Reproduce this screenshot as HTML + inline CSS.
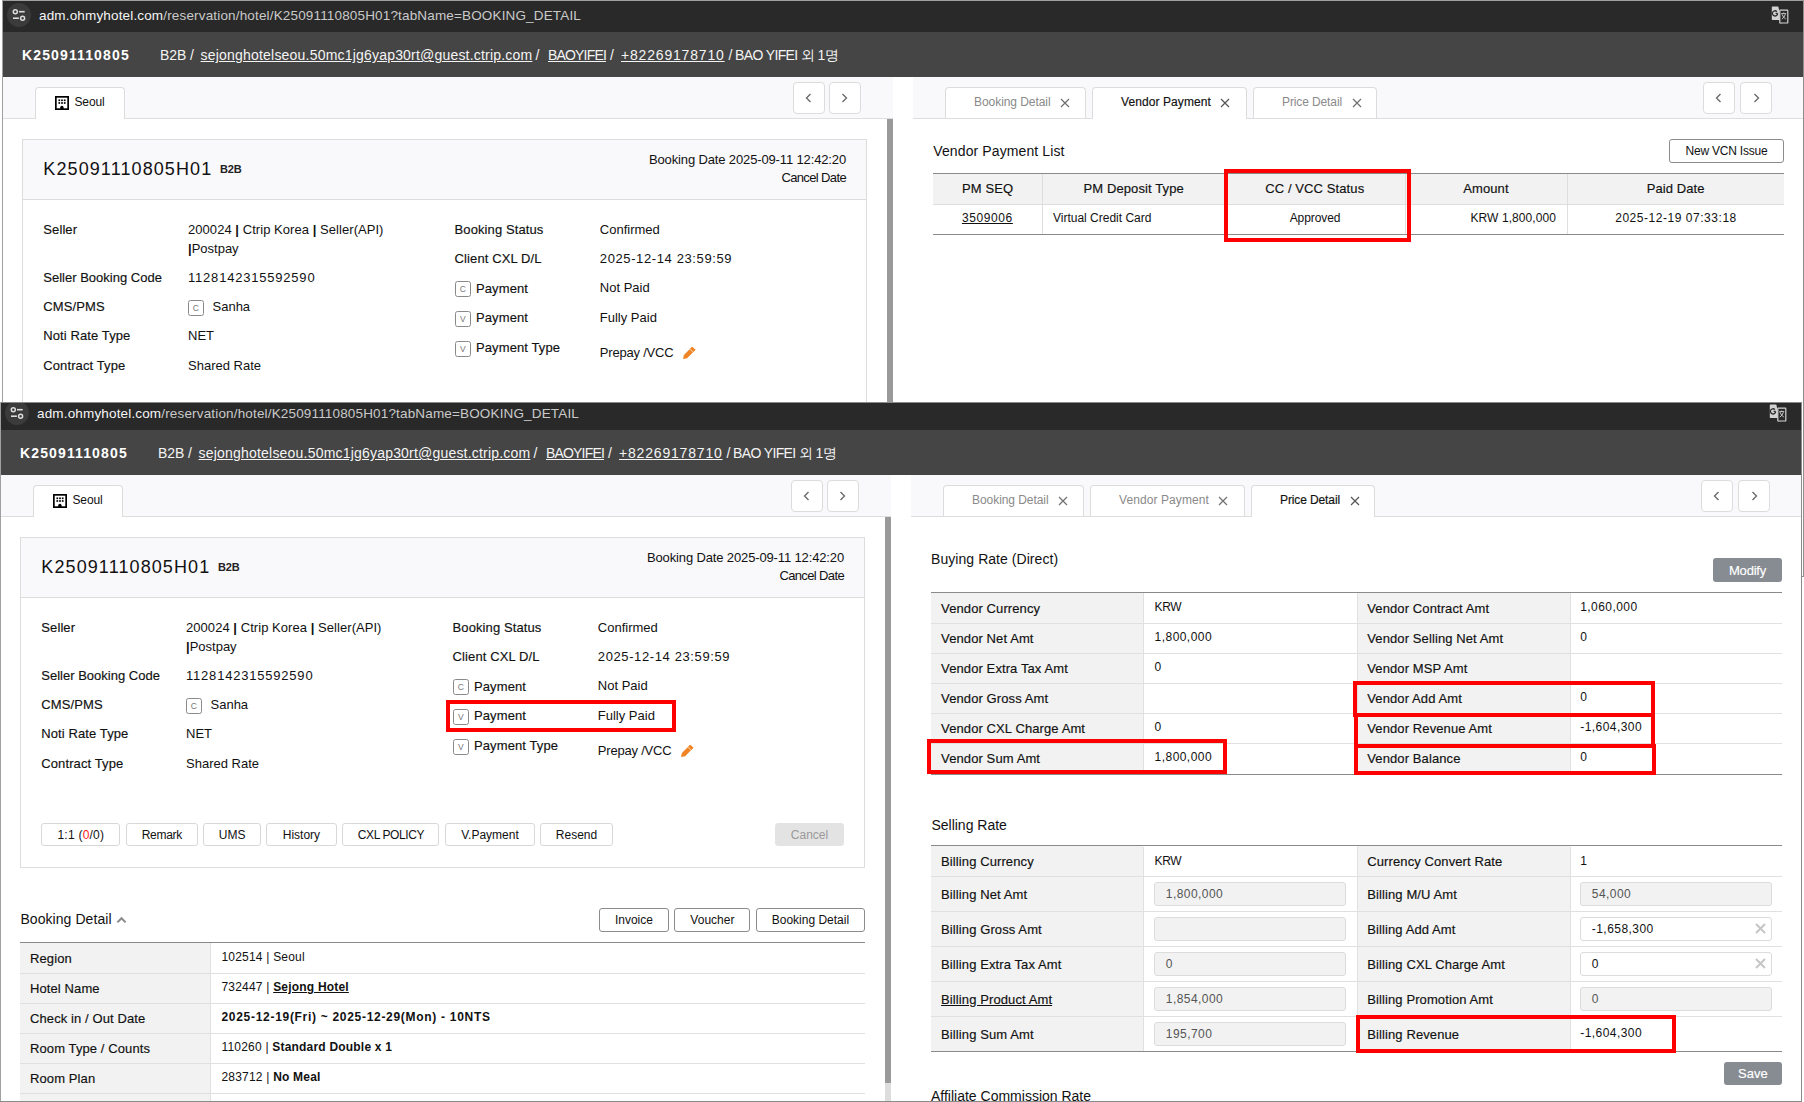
<!DOCTYPE html><html><head><meta charset="utf-8"><style>*{margin:0;padding:0}html,body{width:1804px;height:1102px;overflow:hidden;background:#fff}body{position:relative;font-family:'Liberation Sans', sans-serif}div{position:absolute;white-space:nowrap}.m{-webkit-text-stroke:0.16px currentColor;letter-spacing:0.1px}</style></head><body><div style="left:0;top:0;width:1804px;height:577px;overflow:hidden;background:#fff">
<div style="left:3.00px;top:1.00px;width:1800.00px;height:31.00px;background:#292929;"></div>
<div style="left:6.80px;top:3.00px;width:24.00px;height:24.00px;background:#3b3b3b;border-radius:50%;"></div>
<svg style="position:absolute;left:11.00px;top:8.00px" width="17" height="14" viewBox="0 0 17 14"><circle cx="4.3" cy="3.7" r="2" stroke="#ddd" stroke-width="1.5" fill="none"/><path d="M8 3.7 H13.7" stroke="#ddd" stroke-width="1.6"/><path d="M2 10.2 H7.9" stroke="#ddd" stroke-width="1.6"/><circle cx="11.6" cy="10.2" r="2" stroke="#ddd" stroke-width="1.5" fill="none"/></svg>
<div style="top:8.87px;font-size:13.5px;line-height:13.5px;color:#f5f5f5;letter-spacing:0.160px;left:39.00px;">adm.ohmyhotel.com<span style="color:#c9c9c9">/reservation/hotel/K25091110805H01?tabName=BOOKING_DETAIL</span></div>
<svg style="position:absolute;left:1771.00px;top:6.00px" width="18" height="18" viewBox="0 0 18 18"><path d="M0.8 1.2 Q0.8 0.6 1.4 0.6 L7.3 0.6 L11.2 17.3 L9.6 17.3 L8.4 13.9 L1.4 13.9 Q0.8 13.9 0.8 13.3 Z" fill="#d2d2d2"/><path d="M6.6 7.4 L4.6 7.4 M6.6 7.4 A2.6 2.6 0 1 1 5.9 5.6" stroke="#2a2a2a" stroke-width="1.3" fill="none"/><rect x="8.8" y="4.2" width="8" height="12.8" rx="0.6" fill="#2a2a2a" stroke="#d2d2d2" stroke-width="1.2"/><path d="M10.2 7.6 H15.2 M12.7 6.6 V7.6 M11 8.2 Q12 11.5 14.8 13 M14.4 8.2 Q13.4 11.5 10.8 13.2" stroke="#d2d2d2" stroke-width="0.9" fill="none"/></svg>
<div style="left:3.00px;top:32.00px;width:1800.00px;height:45.00px;background:#454545;"></div>
<div style="top:48.15px;font-size:14px;line-height:14px;color:#fff;font-weight:bold;letter-spacing:1.132px;left:22.00px;">K25091110805</div>
<div style="top:48.15px;font-size:14px;line-height:14px;color:#f4f4f4;letter-spacing:-0.070px;left:160.00px;">B2B /</div>
<div style="top:48.15px;font-size:14px;line-height:14px;color:#f4f4f4;letter-spacing:0.200px;text-decoration:underline;left:200.60px;">sejonghotelseou.50mc1jg6yap30rt@guest.ctrip.com</div>
<div style="top:48.15px;font-size:14px;line-height:14px;color:#f4f4f4;left:535.50px;">/</div>
<div style="top:48.15px;font-size:14px;line-height:14px;color:#f4f4f4;letter-spacing:-0.822px;text-decoration:underline;left:548.00px;">BAOYIFEI</div>
<div style="top:48.15px;font-size:14px;line-height:14px;color:#f4f4f4;left:610.00px;">/</div>
<div style="top:48.15px;font-size:14px;line-height:14px;color:#f4f4f4;letter-spacing:0.814px;text-decoration:underline;left:621.00px;">+82269178710</div>
<div style="top:48.15px;font-size:14px;line-height:14px;color:#f4f4f4;letter-spacing:-0.629px;left:728.50px;">/ BAO YIFEI 외 1명</div>
<div style="left:3.00px;top:77.00px;width:890.00px;height:42.00px;background:#f9f8fa;"></div>
<div style="left:3.00px;top:118.00px;width:890.00px;height:1.00px;background:#dedede;"></div>
<div style="left:35.00px;top:87.00px;width:90.00px;height:32.00px;box-sizing:border-box;background:#fff;border:1px solid #dcdcdc;border-bottom:none;border-radius:4px 4px 0 0;"></div>
<svg style="position:absolute;left:55.00px;top:96.00px" width="14" height="14" viewBox="0 0 14 14"><rect x="0.85" y="0.85" width="12.3" height="12.3" fill="#fff" stroke="#000" stroke-width="1.7"/><rect x="3.45" y="3.45" width="1.7" height="1.7" fill="#000"/><rect x="3.45" y="6.15" width="1.7" height="1.7" fill="#000"/><rect x="6.15" y="3.45" width="1.7" height="1.7" fill="#000"/><rect x="6.15" y="6.15" width="1.7" height="1.7" fill="#000"/><rect x="8.85" y="3.45" width="1.7" height="1.7" fill="#000"/><rect x="8.85" y="6.15" width="1.7" height="1.7" fill="#000"/><path d="M5.2 13.2 L5.2 10.9 Q6.9 8.5 8.6 10.9 L8.6 13.2 Z" fill="#000"/></svg>
<div style="top:96.14px;font-size:12px;line-height:12px;color:#111;letter-spacing:-0.141px;left:74.50px;">Seoul</div>
<div style="left:793.00px;top:82.00px;width:31.50px;height:31.50px;box-sizing:border-box;background:#fff;border:1px solid #dcdcdc;border-radius:4px;"></div>
<svg style="position:absolute;left:805.25px;top:92.80px" width="7" height="10" viewBox="0 0 7 10"><path d="M5.5 1 L1.5 5 L5.5 9" stroke="#666" stroke-width="1.3" fill="none"/></svg>
<div style="left:829.00px;top:82.00px;width:31.50px;height:31.50px;box-sizing:border-box;background:#fff;border:1px solid #dcdcdc;border-radius:4px;"></div>
<svg style="position:absolute;left:841.25px;top:92.80px" width="7" height="10" viewBox="0 0 7 10"><path d="M1.5 1 L5.5 5 L1.5 9" stroke="#666" stroke-width="1.3" fill="none"/></svg>
<div style="left:913.00px;top:77.00px;width:890.00px;height:42.00px;background:#f9f8fa;"></div>
<div style="left:913.00px;top:118.00px;width:890.00px;height:1.00px;background:#dedede;"></div>
<div style="left:945.30px;top:87.00px;width:141.00px;height:31.00px;box-sizing:border-box;background:#fff;border:1px solid #dcdcdc;border-bottom:none;border-radius:4px 4px 0 0;"></div>
<div style="top:96.14px;font-size:12px;line-height:12px;color:#8a8a8a;letter-spacing:-0.056px;left:974.00px;">Booking Detail</div>
<svg style="position:absolute;left:1060.20px;top:97.60px" width="10" height="10" viewBox="0 0 10 10"><path d="M1 1 L9 9 M9 1 L1 9" stroke="#707070" stroke-width="1.2" fill="none"/></svg>
<div style="left:1092.40px;top:87.00px;width:154.30px;height:32.00px;box-sizing:border-box;background:#fff;border:1px solid #dcdcdc;border-bottom:none;border-radius:4px 4px 0 0;"></div>
<div class="m" style="top:96.14px;font-size:12px;line-height:12px;color:#111;letter-spacing:0.090px;left:1121.00px;">Vendor Payment</div>
<svg style="position:absolute;left:1220.00px;top:97.60px" width="10" height="10" viewBox="0 0 10 10"><path d="M1 1 L9 9 M9 1 L1 9" stroke="#555" stroke-width="1.2" fill="none"/></svg>
<div style="left:1252.60px;top:87.00px;width:124.90px;height:31.00px;box-sizing:border-box;background:#fff;border:1px solid #dcdcdc;border-bottom:none;border-radius:4px 4px 0 0;"></div>
<div style="top:96.14px;font-size:12px;line-height:12px;color:#8a8a8a;letter-spacing:-0.113px;left:1282.00px;">Price Detail</div>
<svg style="position:absolute;left:1351.50px;top:97.60px" width="10" height="10" viewBox="0 0 10 10"><path d="M1 1 L9 9 M9 1 L1 9" stroke="#707070" stroke-width="1.2" fill="none"/></svg>
<div style="left:1703.30px;top:82.00px;width:31.30px;height:31.50px;box-sizing:border-box;background:#fff;border:1px solid #dcdcdc;border-radius:4px;"></div>
<svg style="position:absolute;left:1715.40px;top:92.80px" width="7" height="10" viewBox="0 0 7 10"><path d="M5.5 1 L1.5 5 L5.5 9" stroke="#666" stroke-width="1.3" fill="none"/></svg>
<div style="left:1740.40px;top:82.00px;width:31.30px;height:31.50px;box-sizing:border-box;background:#fff;border:1px solid #dcdcdc;border-radius:4px;"></div>
<svg style="position:absolute;left:1752.50px;top:92.80px" width="7" height="10" viewBox="0 0 7 10"><path d="M1.5 1 L5.5 5 L1.5 9" stroke="#666" stroke-width="1.3" fill="none"/></svg>
<div style="left:887.00px;top:119.00px;width:6.00px;height:700.00px;background:#9a9a9a;"></div>
<div style="left:2.00px;top:0.00px;width:1.00px;height:1200.00px;background:#a0a0a0;"></div>
<div style="left:3.00px;top:0.00px;width:1801.00px;height:1.00px;background:#a0a0a0;"></div>
<div style="left:1803.00px;top:0.00px;width:1.00px;height:576.00px;background:#8f8f8f;"></div>
<div style="left:1802.00px;top:576.00px;width:2.00px;height:1.00px;background:#8f8f8f;"></div>
<div style="left:22.00px;top:139.00px;width:845.00px;height:331.00px;box-sizing:border-box;border:1px solid #dddddd;background:#fff;"></div>
<div style="left:23.00px;top:140.00px;width:843.00px;height:59.00px;background:#f9f8fb;"></div>
<div style="left:23.00px;top:199.00px;width:843.00px;height:1.00px;background:#dddddd;"></div>
<div style="top:159.76px;font-size:18px;line-height:18px;color:#111;letter-spacing:1.101px;left:43.30px;">K25091110805H01</div>
<div style="top:163.69px;font-size:11px;line-height:11px;color:#222;font-weight:bold;letter-spacing:-0.105px;left:220.00px;">B2B</div>
<div style="top:153.40px;font-size:13px;line-height:13px;color:#111;letter-spacing:-0.138px;left:-154.00px;width:1000px;text-align:right;">Booking Date 2025-09-11 12:42:20</div>
<div style="top:171.30px;font-size:13px;line-height:13px;color:#111;letter-spacing:-0.632px;left:-154.00px;width:1000px;text-align:right;">Cancel Date</div>
<div class="m" style="top:223.00px;font-size:13px;line-height:13px;color:#111;left:43.30px;">Seller</div>
<div class="m" style="top:271.00px;font-size:13px;line-height:13px;color:#111;letter-spacing:0.004px;left:43.30px;">Seller Booking Code</div>
<div class="m" style="top:300.00px;font-size:13px;line-height:13px;color:#111;left:43.30px;">CMS/PMS</div>
<div class="m" style="top:329.00px;font-size:13px;line-height:13px;color:#111;left:43.30px;">Noti Rate Type</div>
<div class="m" style="top:359.00px;font-size:13px;line-height:13px;color:#111;left:43.30px;">Contract Type</div>

<div style="top:223.00px;font-size:13px;line-height:13px;color:#111;letter-spacing:0.052px;left:188.00px;">200024 <b style="font-weight:bold">|</b> Ctrip Korea <b style="font-weight:bold">|</b> Seller(API)</div>
<div style="top:242.00px;font-size:13px;line-height:13px;color:#111;left:188.00px;"><b style="font-weight:bold">|</b>Postpay</div>
<div style="top:271.00px;font-size:13px;line-height:13px;color:#111;letter-spacing:0.793px;left:188.00px;">1128142315592590</div>
<div style="left:188.00px;top:300.20px;width:15.50px;height:15.50px;box-sizing:border-box;border:1px solid #8a8a8a;border-radius:2.5px;background:#fff;"></div>
<div style="top:304.20px;font-size:8.5px;line-height:8.5px;color:#777;left:-304.25px;width:1000px;text-align:center;">C</div>
<div style="top:300.00px;font-size:13px;line-height:13px;color:#111;left:212.50px;">Sanha</div>
<div style="top:329.00px;font-size:13px;line-height:13px;color:#111;left:188.00px;">NET</div>
<div style="top:359.00px;font-size:13px;line-height:13px;color:#111;left:188.00px;">Shared Rate</div>
<div class="m" style="top:223.40px;font-size:13px;line-height:13px;color:#111;left:454.60px;">Booking Status</div>
<div class="m" style="top:252.00px;font-size:13px;line-height:13px;color:#111;left:454.60px;">Client CXL D/L</div>
<div style="left:455.00px;top:281.10px;width:15.50px;height:15.50px;box-sizing:border-box;border:1px solid #8a8a8a;border-radius:2.5px;background:#fff;"></div>
<div style="top:285.10px;font-size:8.5px;line-height:8.5px;color:#777;left:-37.25px;width:1000px;text-align:center;">C</div>
<div class="m" style="top:282.00px;font-size:13px;line-height:13px;color:#111;left:476.00px;">Payment</div>
<div style="left:455.00px;top:311.20px;width:15.50px;height:15.50px;box-sizing:border-box;border:1px solid #8a8a8a;border-radius:2.5px;background:#fff;"></div>
<div style="top:315.20px;font-size:8.5px;line-height:8.5px;color:#777;left:-37.25px;width:1000px;text-align:center;">V</div>
<div class="m" style="top:311.00px;font-size:13px;line-height:13px;color:#111;left:476.00px;">Payment</div>
<div style="left:455.00px;top:341.30px;width:15.50px;height:15.50px;box-sizing:border-box;border:1px solid #8a8a8a;border-radius:2.5px;background:#fff;"></div>
<div style="top:345.30px;font-size:8.5px;line-height:8.5px;color:#777;left:-37.25px;width:1000px;text-align:center;">V</div>
<div class="m" style="top:341.00px;font-size:13px;line-height:13px;color:#111;left:476.00px;">Payment Type</div>
<div style="top:223.40px;font-size:13px;line-height:13px;color:#111;left:599.80px;">Confirmed</div>
<div style="top:252.00px;font-size:13px;line-height:13px;color:#111;letter-spacing:0.615px;left:599.80px;">2025-12-14 23:59:59</div>
<div style="top:281.40px;font-size:13px;line-height:13px;color:#111;left:599.80px;">Not Paid</div>
<div style="top:311.00px;font-size:13px;line-height:13px;color:#111;left:599.80px;">Fully Paid</div>
<div style="top:346.00px;font-size:13px;line-height:13px;color:#111;letter-spacing:-0.207px;left:599.80px;">Prepay /VCC</div>
<svg style="position:absolute;left:681.00px;top:345.00px" width="17" height="17" viewBox="0 0 17 17"><path d="M2.40 13.70 L3.21 9.99 L8.73 4.47 L11.63 7.37 L6.11 12.89 Z" fill="#ef8424" stroke="#ef8424" stroke-width="0.6" stroke-linejoin="round"/><path d="M9.36 3.84 L11.27 1.93 L14.17 4.83 L12.26 6.74 Z" fill="#ef8424" stroke="#ef8424" stroke-width="0.8" stroke-linejoin="round"/></svg>
<div style="top:144.15px;font-size:14px;line-height:14px;color:#111;letter-spacing:0.111px;left:933.30px;">Vendor Payment List</div>
<div style="left:1669.40px;top:139.40px;width:114.20px;height:23.30px;box-sizing:border-box;border-radius:3px;background:#fff;border:1px solid #8c8c8c;"></div>
<div style="top:145.21px;font-size:12px;line-height:12px;color:#111;letter-spacing:-0.208px;left:1226.50px;width:1000px;text-align:center;">New VCN Issue</div>
<div style="left:933.00px;top:173.00px;width:851.00px;height:1.30px;background:#8a8a8a;"></div>
<div style="left:933.00px;top:174.00px;width:851.00px;height:30.00px;background:#f2f2f2;"></div>
<div style="left:933.00px;top:204.00px;width:851.00px;height:1.00px;background:#dedede;"></div>
<div style="left:933.00px;top:234.00px;width:851.00px;height:1.30px;background:#8a8a8a;"></div>
<div style="left:1042.40px;top:174.00px;width:1.00px;height:60.00px;background:#dedede;"></div>
<div style="left:1225.00px;top:174.00px;width:1.00px;height:60.00px;background:#dedede;"></div>
<div style="left:1404.50px;top:174.00px;width:1.00px;height:60.00px;background:#dedede;"></div>
<div style="left:1567.30px;top:174.00px;width:1.00px;height:60.00px;background:#dedede;"></div>
<div class="m" style="top:182.30px;font-size:13px;line-height:13px;color:#111;left:487.70px;width:1000px;text-align:center;">PM SEQ</div>
<div class="m" style="top:182.30px;font-size:13px;line-height:13px;color:#111;left:633.70px;width:1000px;text-align:center;">PM Deposit Type</div>
<div class="m" style="top:182.30px;font-size:13px;line-height:13px;color:#111;left:814.75px;width:1000px;text-align:center;">CC / VCC Status</div>
<div class="m" style="top:182.30px;font-size:13px;line-height:13px;color:#111;left:985.90px;width:1000px;text-align:center;">Amount</div>
<div class="m" style="top:182.30px;font-size:13px;line-height:13px;color:#111;left:1175.65px;width:1000px;text-align:center;">Paid Date</div>
<div style="top:211.84px;font-size:12px;line-height:12px;color:#111;letter-spacing:0.612px;text-decoration:underline;left:487.40px;width:1000px;text-align:center;">3509006</div>
<div style="top:211.84px;font-size:12px;line-height:12px;color:#111;letter-spacing:-0.004px;left:1053.00px;">Virtual Credit Card</div>
<div style="top:212.04px;font-size:12px;line-height:12px;color:#111;letter-spacing:-0.097px;left:815.00px;width:1000px;text-align:center;">Approved</div>
<div style="top:212.04px;font-size:12px;line-height:12px;color:#111;letter-spacing:0.077px;left:556.00px;width:1000px;text-align:right;">KRW 1,800,000</div>
<div style="top:212.04px;font-size:12px;line-height:12px;color:#111;letter-spacing:0.535px;left:1176.00px;width:1000px;text-align:center;">2025-12-19 07:33:18</div>
<div style="left:1224.00px;top:169.00px;width:187.00px;height:73.00px;box-sizing:border-box;border:4px solid #ff0000;"></div>
</div>
<div style="left:0;top:402px;width:1802px;height:700px;overflow:hidden;background:#fff">
<div style="left:-2px;top:-4px;width:1806px;height:720px;">
<div style="left:3.00px;top:1.00px;width:1800.00px;height:31.00px;background:#292929;"></div>
<div style="left:6.80px;top:3.00px;width:24.00px;height:24.00px;background:#3b3b3b;border-radius:50%;"></div>
<svg style="position:absolute;left:11.00px;top:8.00px" width="17" height="14" viewBox="0 0 17 14"><circle cx="4.3" cy="3.7" r="2" stroke="#ddd" stroke-width="1.5" fill="none"/><path d="M8 3.7 H13.7" stroke="#ddd" stroke-width="1.6"/><path d="M2 10.2 H7.9" stroke="#ddd" stroke-width="1.6"/><circle cx="11.6" cy="10.2" r="2" stroke="#ddd" stroke-width="1.5" fill="none"/></svg>
<div style="top:8.87px;font-size:13.5px;line-height:13.5px;color:#f5f5f5;letter-spacing:0.160px;left:39.00px;">adm.ohmyhotel.com<span style="color:#c9c9c9">/reservation/hotel/K25091110805H01?tabName=BOOKING_DETAIL</span></div>
<svg style="position:absolute;left:1771.00px;top:6.00px" width="18" height="18" viewBox="0 0 18 18"><path d="M0.8 1.2 Q0.8 0.6 1.4 0.6 L7.3 0.6 L11.2 17.3 L9.6 17.3 L8.4 13.9 L1.4 13.9 Q0.8 13.9 0.8 13.3 Z" fill="#d2d2d2"/><path d="M6.6 7.4 L4.6 7.4 M6.6 7.4 A2.6 2.6 0 1 1 5.9 5.6" stroke="#2a2a2a" stroke-width="1.3" fill="none"/><rect x="8.8" y="4.2" width="8" height="12.8" rx="0.6" fill="#2a2a2a" stroke="#d2d2d2" stroke-width="1.2"/><path d="M10.2 7.6 H15.2 M12.7 6.6 V7.6 M11 8.2 Q12 11.5 14.8 13 M14.4 8.2 Q13.4 11.5 10.8 13.2" stroke="#d2d2d2" stroke-width="0.9" fill="none"/></svg>
<div style="left:3.00px;top:32.00px;width:1800.00px;height:45.00px;background:#454545;"></div>
<div style="top:48.15px;font-size:14px;line-height:14px;color:#fff;font-weight:bold;letter-spacing:1.132px;left:22.00px;">K25091110805</div>
<div style="top:48.15px;font-size:14px;line-height:14px;color:#f4f4f4;letter-spacing:-0.070px;left:160.00px;">B2B /</div>
<div style="top:48.15px;font-size:14px;line-height:14px;color:#f4f4f4;letter-spacing:0.200px;text-decoration:underline;left:200.60px;">sejonghotelseou.50mc1jg6yap30rt@guest.ctrip.com</div>
<div style="top:48.15px;font-size:14px;line-height:14px;color:#f4f4f4;left:535.50px;">/</div>
<div style="top:48.15px;font-size:14px;line-height:14px;color:#f4f4f4;letter-spacing:-0.822px;text-decoration:underline;left:548.00px;">BAOYIFEI</div>
<div style="top:48.15px;font-size:14px;line-height:14px;color:#f4f4f4;left:610.00px;">/</div>
<div style="top:48.15px;font-size:14px;line-height:14px;color:#f4f4f4;letter-spacing:0.814px;text-decoration:underline;left:621.00px;">+82269178710</div>
<div style="top:48.15px;font-size:14px;line-height:14px;color:#f4f4f4;letter-spacing:-0.629px;left:728.50px;">/ BAO YIFEI 외 1명</div>
<div style="left:3.00px;top:77.00px;width:890.00px;height:42.00px;background:#f9f8fa;"></div>
<div style="left:3.00px;top:118.00px;width:890.00px;height:1.00px;background:#dedede;"></div>
<div style="left:35.00px;top:87.00px;width:90.00px;height:32.00px;box-sizing:border-box;background:#fff;border:1px solid #dcdcdc;border-bottom:none;border-radius:4px 4px 0 0;"></div>
<svg style="position:absolute;left:55.00px;top:96.00px" width="14" height="14" viewBox="0 0 14 14"><rect x="0.85" y="0.85" width="12.3" height="12.3" fill="#fff" stroke="#000" stroke-width="1.7"/><rect x="3.45" y="3.45" width="1.7" height="1.7" fill="#000"/><rect x="3.45" y="6.15" width="1.7" height="1.7" fill="#000"/><rect x="6.15" y="3.45" width="1.7" height="1.7" fill="#000"/><rect x="6.15" y="6.15" width="1.7" height="1.7" fill="#000"/><rect x="8.85" y="3.45" width="1.7" height="1.7" fill="#000"/><rect x="8.85" y="6.15" width="1.7" height="1.7" fill="#000"/><path d="M5.2 13.2 L5.2 10.9 Q6.9 8.5 8.6 10.9 L8.6 13.2 Z" fill="#000"/></svg>
<div style="top:96.14px;font-size:12px;line-height:12px;color:#111;letter-spacing:-0.141px;left:74.50px;">Seoul</div>
<div style="left:793.00px;top:82.00px;width:31.50px;height:31.50px;box-sizing:border-box;background:#fff;border:1px solid #dcdcdc;border-radius:4px;"></div>
<svg style="position:absolute;left:805.25px;top:92.80px" width="7" height="10" viewBox="0 0 7 10"><path d="M5.5 1 L1.5 5 L5.5 9" stroke="#666" stroke-width="1.3" fill="none"/></svg>
<div style="left:829.00px;top:82.00px;width:31.50px;height:31.50px;box-sizing:border-box;background:#fff;border:1px solid #dcdcdc;border-radius:4px;"></div>
<svg style="position:absolute;left:841.25px;top:92.80px" width="7" height="10" viewBox="0 0 7 10"><path d="M1.5 1 L5.5 5 L1.5 9" stroke="#666" stroke-width="1.3" fill="none"/></svg>
<div style="left:913.00px;top:77.00px;width:890.00px;height:42.00px;background:#f9f8fa;"></div>
<div style="left:913.00px;top:118.00px;width:890.00px;height:1.00px;background:#dedede;"></div>
<div style="left:945.30px;top:87.00px;width:141.00px;height:31.00px;box-sizing:border-box;background:#fff;border:1px solid #dcdcdc;border-bottom:none;border-radius:4px 4px 0 0;"></div>
<div style="top:96.14px;font-size:12px;line-height:12px;color:#8a8a8a;letter-spacing:-0.056px;left:974.00px;">Booking Detail</div>
<svg style="position:absolute;left:1060.20px;top:97.60px" width="10" height="10" viewBox="0 0 10 10"><path d="M1 1 L9 9 M9 1 L1 9" stroke="#707070" stroke-width="1.2" fill="none"/></svg>
<div style="left:1092.40px;top:87.00px;width:154.30px;height:31.00px;box-sizing:border-box;background:#fff;border:1px solid #dcdcdc;border-bottom:none;border-radius:4px 4px 0 0;"></div>
<div style="top:96.14px;font-size:12px;line-height:12px;color:#8a8a8a;letter-spacing:0.090px;left:1121.00px;">Vendor Payment</div>
<svg style="position:absolute;left:1220.00px;top:97.60px" width="10" height="10" viewBox="0 0 10 10"><path d="M1 1 L9 9 M9 1 L1 9" stroke="#707070" stroke-width="1.2" fill="none"/></svg>
<div style="left:1252.60px;top:87.00px;width:124.90px;height:32.00px;box-sizing:border-box;background:#fff;border:1px solid #dcdcdc;border-bottom:none;border-radius:4px 4px 0 0;"></div>
<div class="m" style="top:96.14px;font-size:12px;line-height:12px;color:#111;letter-spacing:-0.113px;left:1282.00px;">Price Detail</div>
<svg style="position:absolute;left:1351.50px;top:97.60px" width="10" height="10" viewBox="0 0 10 10"><path d="M1 1 L9 9 M9 1 L1 9" stroke="#555" stroke-width="1.2" fill="none"/></svg>
<div style="left:1703.30px;top:82.00px;width:31.30px;height:31.50px;box-sizing:border-box;background:#fff;border:1px solid #dcdcdc;border-radius:4px;"></div>
<svg style="position:absolute;left:1715.40px;top:92.80px" width="7" height="10" viewBox="0 0 7 10"><path d="M5.5 1 L1.5 5 L5.5 9" stroke="#666" stroke-width="1.3" fill="none"/></svg>
<div style="left:1740.40px;top:82.00px;width:31.30px;height:31.50px;box-sizing:border-box;background:#fff;border:1px solid #dcdcdc;border-radius:4px;"></div>
<svg style="position:absolute;left:1752.50px;top:92.80px" width="7" height="10" viewBox="0 0 7 10"><path d="M1.5 1 L5.5 5 L1.5 9" stroke="#666" stroke-width="1.3" fill="none"/></svg>
<div style="left:887.00px;top:119.00px;width:6.00px;height:700.00px;background:#9a9a9a;"></div>
<div style="left:2.00px;top:0.00px;width:1.00px;height:1200.00px;background:#a0a0a0;"></div>
<div style="left:3.00px;top:0.00px;width:1801.00px;height:1.00px;background:#a0a0a0;"></div>
<div style="left:22.00px;top:139.00px;width:845.00px;height:331.00px;box-sizing:border-box;border:1px solid #dddddd;background:#fff;"></div>
<div style="left:23.00px;top:140.00px;width:843.00px;height:59.00px;background:#f9f8fb;"></div>
<div style="left:23.00px;top:199.00px;width:843.00px;height:1.00px;background:#dddddd;"></div>
<div style="top:159.76px;font-size:18px;line-height:18px;color:#111;letter-spacing:1.101px;left:43.30px;">K25091110805H01</div>
<div style="top:163.69px;font-size:11px;line-height:11px;color:#222;font-weight:bold;letter-spacing:-0.105px;left:220.00px;">B2B</div>
<div style="top:153.40px;font-size:13px;line-height:13px;color:#111;letter-spacing:-0.138px;left:-154.00px;width:1000px;text-align:right;">Booking Date 2025-09-11 12:42:20</div>
<div style="top:171.30px;font-size:13px;line-height:13px;color:#111;letter-spacing:-0.632px;left:-154.00px;width:1000px;text-align:right;">Cancel Date</div>
<div class="m" style="top:223.00px;font-size:13px;line-height:13px;color:#111;left:43.30px;">Seller</div>
<div class="m" style="top:271.00px;font-size:13px;line-height:13px;color:#111;letter-spacing:0.004px;left:43.30px;">Seller Booking Code</div>
<div class="m" style="top:300.00px;font-size:13px;line-height:13px;color:#111;left:43.30px;">CMS/PMS</div>
<div class="m" style="top:329.00px;font-size:13px;line-height:13px;color:#111;left:43.30px;">Noti Rate Type</div>
<div class="m" style="top:359.00px;font-size:13px;line-height:13px;color:#111;left:43.30px;">Contract Type</div>

<div style="top:223.00px;font-size:13px;line-height:13px;color:#111;letter-spacing:0.052px;left:188.00px;">200024 <b style="font-weight:bold">|</b> Ctrip Korea <b style="font-weight:bold">|</b> Seller(API)</div>
<div style="top:242.00px;font-size:13px;line-height:13px;color:#111;left:188.00px;"><b style="font-weight:bold">|</b>Postpay</div>
<div style="top:271.00px;font-size:13px;line-height:13px;color:#111;letter-spacing:0.793px;left:188.00px;">1128142315592590</div>
<div style="left:188.00px;top:300.20px;width:15.50px;height:15.50px;box-sizing:border-box;border:1px solid #8a8a8a;border-radius:2.5px;background:#fff;"></div>
<div style="top:304.20px;font-size:8.5px;line-height:8.5px;color:#777;left:-304.25px;width:1000px;text-align:center;">C</div>
<div style="top:300.00px;font-size:13px;line-height:13px;color:#111;left:212.50px;">Sanha</div>
<div style="top:329.00px;font-size:13px;line-height:13px;color:#111;left:188.00px;">NET</div>
<div style="top:359.00px;font-size:13px;line-height:13px;color:#111;left:188.00px;">Shared Rate</div>
<div class="m" style="top:223.40px;font-size:13px;line-height:13px;color:#111;left:454.60px;">Booking Status</div>
<div class="m" style="top:252.00px;font-size:13px;line-height:13px;color:#111;left:454.60px;">Client CXL D/L</div>
<div style="left:455.00px;top:281.10px;width:15.50px;height:15.50px;box-sizing:border-box;border:1px solid #8a8a8a;border-radius:2.5px;background:#fff;"></div>
<div style="top:285.10px;font-size:8.5px;line-height:8.5px;color:#777;left:-37.25px;width:1000px;text-align:center;">C</div>
<div class="m" style="top:282.00px;font-size:13px;line-height:13px;color:#111;left:476.00px;">Payment</div>
<div style="left:455.00px;top:311.20px;width:15.50px;height:15.50px;box-sizing:border-box;border:1px solid #8a8a8a;border-radius:2.5px;background:#fff;"></div>
<div style="top:315.20px;font-size:8.5px;line-height:8.5px;color:#777;left:-37.25px;width:1000px;text-align:center;">V</div>
<div class="m" style="top:311.00px;font-size:13px;line-height:13px;color:#111;left:476.00px;">Payment</div>
<div style="left:455.00px;top:341.30px;width:15.50px;height:15.50px;box-sizing:border-box;border:1px solid #8a8a8a;border-radius:2.5px;background:#fff;"></div>
<div style="top:345.30px;font-size:8.5px;line-height:8.5px;color:#777;left:-37.25px;width:1000px;text-align:center;">V</div>
<div class="m" style="top:341.00px;font-size:13px;line-height:13px;color:#111;left:476.00px;">Payment Type</div>
<div style="top:223.40px;font-size:13px;line-height:13px;color:#111;left:599.80px;">Confirmed</div>
<div style="top:252.00px;font-size:13px;line-height:13px;color:#111;letter-spacing:0.615px;left:599.80px;">2025-12-14 23:59:59</div>
<div style="top:281.40px;font-size:13px;line-height:13px;color:#111;left:599.80px;">Not Paid</div>
<div style="top:311.00px;font-size:13px;line-height:13px;color:#111;left:599.80px;">Fully Paid</div>
<div style="top:346.00px;font-size:13px;line-height:13px;color:#111;letter-spacing:-0.207px;left:599.80px;">Prepay /VCC</div>
<svg style="position:absolute;left:681.00px;top:345.00px" width="17" height="17" viewBox="0 0 17 17"><path d="M2.40 13.70 L3.21 9.99 L8.73 4.47 L11.63 7.37 L6.11 12.89 Z" fill="#ef8424" stroke="#ef8424" stroke-width="0.6" stroke-linejoin="round"/><path d="M9.36 3.84 L11.27 1.93 L14.17 4.83 L12.26 6.74 Z" fill="#ef8424" stroke="#ef8424" stroke-width="0.8" stroke-linejoin="round"/></svg>
<div style="left:43.20px;top:425.20px;width:79.30px;height:23.10px;box-sizing:border-box;border-radius:3px;background:#fff;border:1px solid #d8d8d8;"></div>
<div style="top:430.91px;font-size:12px;line-height:12px;color:#111;letter-spacing:0.231px;left:-417.15px;width:1000px;text-align:center;">1:1 (<span style="color:#ff2020">0</span>/0)</div>
<div style="left:128.00px;top:425.20px;width:71.60px;height:23.10px;box-sizing:border-box;border-radius:3px;background:#fff;border:1px solid #d8d8d8;"></div>
<div style="top:430.91px;font-size:12px;line-height:12px;color:#111;letter-spacing:-0.303px;left:-336.20px;width:1000px;text-align:center;">Remark</div>
<div style="left:205.40px;top:425.20px;width:57.30px;height:23.10px;box-sizing:border-box;border-radius:3px;background:#fff;border:1px solid #d8d8d8;"></div>
<div style="top:430.91px;font-size:12px;line-height:12px;color:#111;left:-265.95px;width:1000px;text-align:center;">UMS</div>
<div style="left:268.30px;top:425.20px;width:70.30px;height:23.10px;box-sizing:border-box;border-radius:3px;background:#fff;border:1px solid #d8d8d8;"></div>
<div style="top:430.91px;font-size:12px;line-height:12px;color:#111;left:-196.55px;width:1000px;text-align:center;">History</div>
<div style="left:344.40px;top:425.20px;width:97.10px;height:23.10px;box-sizing:border-box;border-radius:3px;background:#fff;border:1px solid #d8d8d8;"></div>
<div style="top:430.91px;font-size:12px;line-height:12px;color:#111;letter-spacing:-0.395px;left:-107.05px;width:1000px;text-align:center;">CXL POLICY</div>
<div style="left:447.00px;top:425.20px;width:90.00px;height:23.10px;box-sizing:border-box;border-radius:3px;background:#fff;border:1px solid #d8d8d8;"></div>
<div style="top:430.91px;font-size:12px;line-height:12px;color:#111;left:-8.00px;width:1000px;text-align:center;">V.Payment</div>
<div style="left:542.30px;top:425.20px;width:72.40px;height:23.10px;box-sizing:border-box;border-radius:3px;background:#fff;border:1px solid #d8d8d8;"></div>
<div style="top:430.91px;font-size:12px;line-height:12px;color:#111;left:78.50px;width:1000px;text-align:center;">Resend</div>
<div style="left:777.00px;top:425.20px;width:69.00px;height:23.10px;box-sizing:border-box;border-radius:3px;background:#e3e3e3;border:1px solid #e3e3e3;"></div>
<div style="top:430.91px;font-size:12px;line-height:12px;color:#9a9a9a;left:311.50px;width:1000px;text-align:center;">Cancel</div>
<div style="left:447.80px;top:302.00px;width:230.10px;height:31.60px;box-sizing:border-box;border:4px solid #ff0000;"></div>
<div style="top:513.85px;font-size:14px;line-height:14px;color:#111;letter-spacing:0.066px;left:22.40px;">Booking Detail</div>
<svg style="position:absolute;left:117.90px;top:518.00px" width="11" height="8" viewBox="0 0 11 8"><path d="M1.4 6.4 L5.5 2.2 L9.6 6.4" stroke="#8a8a8a" stroke-width="2" fill="none"/></svg>
<div style="left:601.20px;top:510.10px;width:69.40px;height:23.50px;box-sizing:border-box;border-radius:3px;background:#fff;border:1px solid #8c8c8c;"></div>
<div style="top:516.01px;font-size:12px;line-height:12px;color:#111;left:135.90px;width:1000px;text-align:center;">Invoice</div>
<div style="left:676.30px;top:510.10px;width:76.20px;height:23.50px;box-sizing:border-box;border-radius:3px;background:#fff;border:1px solid #8c8c8c;"></div>
<div style="top:516.01px;font-size:12px;line-height:12px;color:#111;left:214.40px;width:1000px;text-align:center;">Voucher</div>
<div style="left:758.20px;top:510.10px;width:108.50px;height:23.50px;box-sizing:border-box;border-radius:3px;background:#fff;border:1px solid #8c8c8c;"></div>
<div style="top:516.01px;font-size:12px;line-height:12px;color:#111;left:312.45px;width:1000px;text-align:center;">Booking Detail</div>
<div style="left:22.00px;top:543.50px;width:844.70px;height:1.50px;background:#8a8a8a;"></div>
<div style="left:22.00px;top:545.00px;width:190.40px;height:30.00px;background:#f2f2f2;"></div>
<div style="left:22.00px;top:575.00px;width:190.40px;height:30.00px;background:#f2f2f2;"></div>
<div style="left:22.00px;top:605.00px;width:190.40px;height:30.00px;background:#f2f2f2;"></div>
<div style="left:22.00px;top:635.00px;width:190.40px;height:30.00px;background:#f2f2f2;"></div>
<div style="left:22.00px;top:665.00px;width:190.40px;height:30.00px;background:#f2f2f2;"></div>
<div style="left:22.00px;top:695.00px;width:190.40px;height:30.00px;background:#f2f2f2;"></div>
<div style="left:212.40px;top:545.00px;width:1.00px;height:180.00px;background:#e0e0e0;"></div>
<div style="left:22.00px;top:575.00px;width:844.70px;height:1.00px;background:#e0e0e0;"></div>
<div class="m" style="top:554.00px;font-size:13px;line-height:13px;color:#111;left:32.00px;">Region</div>
<div style="top:553.14px;font-size:12px;line-height:12px;color:#111;letter-spacing:0.2px;left:223.50px;">102514 | Seoul</div>
<div style="left:22.00px;top:605.00px;width:844.70px;height:1.00px;background:#e0e0e0;"></div>
<div class="m" style="top:584.00px;font-size:13px;line-height:13px;color:#111;left:32.00px;">Hotel Name</div>
<div style="top:583.14px;font-size:12px;line-height:12px;color:#111;letter-spacing:0.2px;left:223.50px;">732447 | <b style="font-weight:bold;text-decoration:underline">Sejong Hotel</b></div>
<div style="left:22.00px;top:635.00px;width:844.70px;height:1.00px;background:#e0e0e0;"></div>
<div class="m" style="top:614.00px;font-size:13px;line-height:13px;color:#111;left:32.00px;">Check in / Out Date</div>
<div style="top:613.14px;font-size:12px;line-height:12px;color:#111;letter-spacing:0.2px;left:223.50px;"><b style="font-weight:bold;letter-spacing:0.7px">2025-12-19(Fri) ~ 2025-12-29(Mon) - 10NTS</b></div>
<div style="left:22.00px;top:665.00px;width:844.70px;height:1.00px;background:#e0e0e0;"></div>
<div class="m" style="top:644.00px;font-size:13px;line-height:13px;color:#111;left:32.00px;">Room Type / Counts</div>
<div style="top:643.14px;font-size:12px;line-height:12px;color:#111;letter-spacing:0.2px;left:223.50px;">110260 | <b style="font-weight:bold">Standard Double x 1</b></div>
<div style="left:22.00px;top:695.00px;width:844.70px;height:1.00px;background:#e0e0e0;"></div>
<div class="m" style="top:674.00px;font-size:13px;line-height:13px;color:#111;left:32.00px;">Room Plan</div>
<div style="top:673.14px;font-size:12px;line-height:12px;color:#111;letter-spacing:0.2px;left:223.50px;">283712 | <b style="font-weight:bold">No Meal</b></div>
<div style="left:22.00px;top:725.00px;width:844.70px;height:1.00px;background:#e0e0e0;"></div>
<div style="left:887.00px;top:685.00px;width:6.00px;height:30.00px;background:#dddddd;"></div>
<div style="top:154.35px;font-size:14px;line-height:14px;color:#111;letter-spacing:0.048px;left:933.10px;">Buying Rate (Direct)</div>
<div style="left:1715.00px;top:160.40px;width:69.00px;height:23.20px;box-sizing:border-box;border-radius:3px;background:#878c92;border:none;"></div>
<div class="m" style="top:165.68px;font-size:13px;line-height:13px;color:#fff;letter-spacing:-0.216px;left:1249.50px;width:1000px;text-align:center;">Modify</div>
<div style="left:933.00px;top:194.00px;width:851.00px;height:1.00px;background:#8a8a8a;"></div>
<div style="left:933.00px;top:195.00px;width:212.40px;height:180.00px;background:#f2f2f2;"></div>
<div style="left:1358.60px;top:195.00px;width:213.00px;height:180.00px;background:#f2f2f2;"></div>
<div style="left:1145.40px;top:195.00px;width:1.00px;height:180.00px;background:#e0e0e0;"></div>
<div style="left:1358.60px;top:195.00px;width:1.00px;height:180.00px;background:#e0e0e0;"></div>
<div style="left:1571.50px;top:195.00px;width:1.00px;height:180.00px;background:#e0e0e0;"></div>
<div style="left:933.00px;top:225.00px;width:851.00px;height:1.00px;background:#e0e0e0;"></div>
<div class="m" style="top:204.20px;font-size:13px;line-height:13px;color:#111;left:943.10px;">Vendor Currency</div>
<div class="m" style="top:204.20px;font-size:13px;line-height:13px;color:#111;left:1369.30px;">Vendor Contract Amt</div>
<div style="top:203.14px;font-size:12px;line-height:12px;color:#111;letter-spacing:-0.4px;left:1156.60px;">KRW</div>
<div style="top:203.14px;font-size:12px;line-height:12px;color:#111;letter-spacing:0.45px;left:1582.20px;">1,060,000</div>
<div style="left:933.00px;top:255.00px;width:851.00px;height:1.00px;background:#e0e0e0;"></div>
<div class="m" style="top:234.20px;font-size:13px;line-height:13px;color:#111;left:943.10px;">Vendor Net Amt</div>
<div class="m" style="top:234.20px;font-size:13px;line-height:13px;color:#111;left:1369.30px;">Vendor Selling Net Amt</div>
<div style="top:233.14px;font-size:12px;line-height:12px;color:#111;letter-spacing:0.45px;left:1156.60px;">1,800,000</div>
<div style="top:233.14px;font-size:12px;line-height:12px;color:#111;letter-spacing:0.45px;left:1582.20px;">0</div>
<div style="left:933.00px;top:285.00px;width:851.00px;height:1.00px;background:#e0e0e0;"></div>
<div class="m" style="top:264.20px;font-size:13px;line-height:13px;color:#111;left:943.10px;">Vendor Extra Tax Amt</div>
<div class="m" style="top:264.20px;font-size:13px;line-height:13px;color:#111;left:1369.30px;">Vendor MSP Amt</div>
<div style="top:263.14px;font-size:12px;line-height:12px;color:#111;letter-spacing:0.45px;left:1156.60px;">0</div>
<div style="left:933.00px;top:315.00px;width:851.00px;height:1.00px;background:#e0e0e0;"></div>
<div class="m" style="top:294.20px;font-size:13px;line-height:13px;color:#111;left:943.10px;">Vendor Gross Amt</div>
<div class="m" style="top:294.20px;font-size:13px;line-height:13px;color:#111;left:1369.30px;">Vendor Add Amt</div>
<div style="top:293.14px;font-size:12px;line-height:12px;color:#111;letter-spacing:0.45px;left:1582.20px;">0</div>
<div style="left:933.00px;top:345.00px;width:851.00px;height:1.00px;background:#e0e0e0;"></div>
<div class="m" style="top:324.20px;font-size:13px;line-height:13px;color:#111;left:943.10px;">Vendor CXL Charge Amt</div>
<div class="m" style="top:324.20px;font-size:13px;line-height:13px;color:#111;left:1369.30px;">Vendor Revenue Amt</div>
<div style="top:323.14px;font-size:12px;line-height:12px;color:#111;letter-spacing:0.45px;left:1156.60px;">0</div>
<div style="top:323.14px;font-size:12px;line-height:12px;color:#111;letter-spacing:0.45px;left:1582.20px;">-1,604,300</div>
<div class="m" style="top:354.20px;font-size:13px;line-height:13px;color:#111;left:943.10px;">Vendor Sum Amt</div>
<div class="m" style="top:354.20px;font-size:13px;line-height:13px;color:#111;left:1369.30px;">Vendor Balance</div>
<div style="top:353.14px;font-size:12px;line-height:12px;color:#111;letter-spacing:0.45px;left:1156.60px;">1,800,000</div>
<div style="top:353.14px;font-size:12px;line-height:12px;color:#111;letter-spacing:0.45px;left:1582.20px;">0</div>
<div style="left:933.00px;top:376.00px;width:851.00px;height:1.00px;background:#8a8a8a;"></div>
<div style="left:929.00px;top:341.00px;width:300.00px;height:35.00px;box-sizing:border-box;border:4px solid #ff0000;"></div>
<div style="left:1355.00px;top:283.00px;width:302.00px;height:36.00px;box-sizing:border-box;border:4px solid #ff0000;"></div>
<div style="left:1356.00px;top:315.00px;width:301.00px;height:35.00px;box-sizing:border-box;border:4px solid #ff0000;"></div>
<div style="left:1356.00px;top:346.00px;width:302.00px;height:31.00px;box-sizing:border-box;border:4px solid #ff0000;"></div>
<div style="top:420.15px;font-size:14px;line-height:14px;color:#111;left:933.40px;">Selling Rate</div>
<div style="left:933.00px;top:447.00px;width:851.00px;height:1.20px;background:#8a8a8a;"></div>
<div style="left:933.00px;top:448.20px;width:212.40px;height:204.80px;background:#f2f2f2;"></div>
<div style="left:1358.60px;top:448.20px;width:213.00px;height:204.80px;background:#f2f2f2;"></div>
<div style="left:1145.40px;top:449.00px;width:1.00px;height:204.00px;background:#e0e0e0;"></div>
<div style="left:1358.60px;top:449.00px;width:1.00px;height:204.00px;background:#e0e0e0;"></div>
<div style="left:1571.50px;top:449.00px;width:1.00px;height:204.00px;background:#e0e0e0;"></div>
<div style="left:933.00px;top:477.50px;width:851.00px;height:1.00px;background:#e0e0e0;"></div>
<div class="m" style="top:457.30px;font-size:13px;line-height:13px;color:#111;left:943.10px;">Billing Currency</div>
<div class="m" style="top:457.30px;font-size:13px;line-height:13px;color:#111;left:1369.30px;">Currency Convert Rate</div>
<div style="top:456.64px;font-size:12px;line-height:12px;color:#111;letter-spacing:-0.4px;left:1156.60px;">KRW</div>
<div style="top:456.64px;font-size:12px;line-height:12px;color:#111;letter-spacing:0.45px;left:1582.20px;">1</div>
<div style="left:933.00px;top:512.50px;width:851.00px;height:1.00px;background:#e0e0e0;"></div>
<div class="m" style="top:489.70px;font-size:13px;line-height:13px;color:#111;left:943.10px;">Billing Net Amt</div>
<div class="m" style="top:489.70px;font-size:13px;line-height:13px;color:#111;left:1369.30px;">Billing M/U Amt</div>
<div style="left:1156.20px;top:483.90px;width:191.60px;height:24.00px;box-sizing:border-box;background:#f2f2f2;border:1px solid #dcdcdc;border-radius:3px;"></div>
<div style="top:489.74px;font-size:12px;line-height:12px;color:#555;letter-spacing:0.45px;left:1167.80px;">1,800,000</div>
<div style="left:1582.20px;top:483.90px;width:191.60px;height:24.00px;box-sizing:border-box;background:#f2f2f2;border:1px solid #dcdcdc;border-radius:3px;"></div>
<div style="top:489.74px;font-size:12px;line-height:12px;color:#555;letter-spacing:0.45px;left:1593.80px;">54,000</div>
<div style="left:933.00px;top:547.50px;width:851.00px;height:1.00px;background:#e0e0e0;"></div>
<div class="m" style="top:524.70px;font-size:13px;line-height:13px;color:#111;left:943.10px;">Billing Gross Amt</div>
<div class="m" style="top:524.70px;font-size:13px;line-height:13px;color:#111;left:1369.30px;">Billing Add Amt</div>
<div style="left:1156.20px;top:518.90px;width:191.60px;height:24.00px;box-sizing:border-box;background:#f2f2f2;border:1px solid #dcdcdc;border-radius:3px;"></div>
<div style="left:1582.20px;top:518.90px;width:191.60px;height:24.00px;box-sizing:border-box;background:#fff;border:1px solid #dcdcdc;border-radius:3px;"></div>
<div style="top:524.74px;font-size:12px;line-height:12px;color:#111;letter-spacing:0.45px;left:1593.80px;">-1,658,300</div>
<svg style="position:absolute;left:1757.20px;top:525.30px" width="11" height="11" viewBox="0 0 11 11"><path d="M1 1 L10 10 M10 1 L1 10" stroke="#c6c6c6" stroke-width="2" fill="none"/></svg>
<div style="left:933.00px;top:582.50px;width:851.00px;height:1.00px;background:#e0e0e0;"></div>
<div class="m" style="top:559.70px;font-size:13px;line-height:13px;color:#111;left:943.10px;">Billing Extra Tax Amt</div>
<div class="m" style="top:559.70px;font-size:13px;line-height:13px;color:#111;left:1369.30px;">Billing CXL Charge Amt</div>
<div style="left:1156.20px;top:553.90px;width:191.60px;height:24.00px;box-sizing:border-box;background:#f2f2f2;border:1px solid #dcdcdc;border-radius:3px;"></div>
<div style="top:559.74px;font-size:12px;line-height:12px;color:#555;letter-spacing:0.45px;left:1167.80px;">0</div>
<div style="left:1582.20px;top:553.90px;width:191.60px;height:24.00px;box-sizing:border-box;background:#fff;border:1px solid #dcdcdc;border-radius:3px;"></div>
<div style="top:559.74px;font-size:12px;line-height:12px;color:#111;letter-spacing:0.45px;left:1593.80px;">0</div>
<svg style="position:absolute;left:1757.20px;top:560.30px" width="11" height="11" viewBox="0 0 11 11"><path d="M1 1 L10 10 M10 1 L1 10" stroke="#c6c6c6" stroke-width="2" fill="none"/></svg>
<div style="left:933.00px;top:617.50px;width:851.00px;height:1.00px;background:#e0e0e0;"></div>
<div class="m" style="top:594.70px;font-size:13px;line-height:13px;color:#111;text-decoration:underline;left:943.10px;">Billing Product Amt</div>
<div class="m" style="top:594.70px;font-size:13px;line-height:13px;color:#111;left:1369.30px;">Billing Promotion Amt</div>
<div style="left:1156.20px;top:588.90px;width:191.60px;height:24.00px;box-sizing:border-box;background:#f2f2f2;border:1px solid #dcdcdc;border-radius:3px;"></div>
<div style="top:594.74px;font-size:12px;line-height:12px;color:#555;letter-spacing:0.45px;left:1167.80px;">1,854,000</div>
<div style="left:1582.20px;top:588.90px;width:191.60px;height:24.00px;box-sizing:border-box;background:#f2f2f2;border:1px solid #dcdcdc;border-radius:3px;"></div>
<div style="top:594.74px;font-size:12px;line-height:12px;color:#555;letter-spacing:0.45px;left:1593.80px;">0</div>
<div class="m" style="top:629.70px;font-size:13px;line-height:13px;color:#111;left:943.10px;">Billing Sum Amt</div>
<div class="m" style="top:629.70px;font-size:13px;line-height:13px;color:#111;left:1369.30px;">Billing Revenue</div>
<div style="left:1156.20px;top:623.90px;width:191.60px;height:24.00px;box-sizing:border-box;background:#f2f2f2;border:1px solid #dcdcdc;border-radius:3px;"></div>
<div style="top:629.74px;font-size:12px;line-height:12px;color:#555;letter-spacing:0.45px;left:1167.80px;">195,700</div>
<div style="top:629.04px;font-size:12px;line-height:12px;color:#111;letter-spacing:0.45px;left:1582.20px;">-1,604,300</div>
<div style="left:933.00px;top:652.50px;width:851.00px;height:1.20px;background:#8a8a8a;"></div>
<div style="left:1358.30px;top:617.40px;width:319.60px;height:38.00px;box-sizing:border-box;border:4px solid #ff0000;"></div>
<div style="left:1726.20px;top:664.20px;width:57.40px;height:23.10px;box-sizing:border-box;border-radius:3px;background:#878c92;border:none;"></div>
<div class="m" style="top:669.43px;font-size:13px;line-height:13px;color:#fff;left:1254.90px;width:1000px;text-align:center;">Save</div>
<div style="top:691.35px;font-size:14px;line-height:14px;color:#111;left:933.00px;">Affiliate Commission Rate</div>
</div>
<div style="left:0;top:0;width:1802px;height:1px;background:#8a8a8a"></div>
<div style="left:0;top:0;width:1px;height:700px;background:#a0a0a0"></div>
<div style="left:1801px;top:0;width:1px;height:700px;background:#8a8a8a"></div>
<div style="left:0;top:699px;width:1802px;height:1px;background:#8a8a8a"></div>
</div></body></html>
